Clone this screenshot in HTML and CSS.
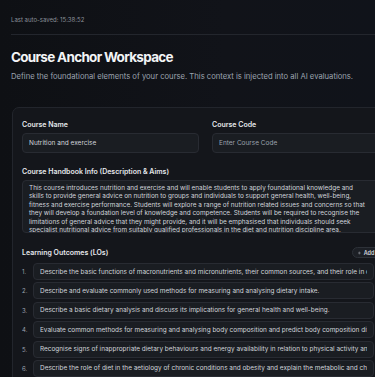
FILE: index.html
```html
<!DOCTYPE html>
<html lang="en">
<head>
  <meta charset="UTF-8" />
  <meta name="viewport" content="width=device-width, initial-scale=1" />
  <title>Course Anchor Workspace</title>
  <link rel="stylesheet" href="styles.css">
</head>
<body>
  <div class="page">
    <div class="topbar">
      <span class="saved">Last auto-saved: 15:38:52</span>
    </div>
    <h1>Course Anchor Workspace</h1>
    <p class="subtitle">Define the foundational elements of your course. This context is injected into all AI evaluations.</p>

    <div class="card">
      <div class="grid">
        <div class="field">
          <label for="courseName">Course Name</label>
          <input type="text" id="courseName" value="Nutrition and exercise" />
        </div>
        <div class="field">
          <label for="courseCode">Course Code</label>
          <input type="text" id="courseCode" placeholder="Enter Course Code" />
        </div>
      </div>

      <div class="field">
        <label for="handbook">Course Handbook Info (Description &amp; Aims)</label>
        <textarea id="handbook">This course introduces nutrition and exercise and will enable students to apply foundational knowledge and skills to provide general advice on nutrition to groups and individuals to support general health, well-being, fitness and exercise performance. Students will explore a range of nutrition related issues and concerns so that they will develop a foundation level of knowledge and competence. Students will be required to recognise the limitations of general advice that they might provide, and it will be emphasised that individuals should seek specialist nutritional advice from suitably qualified professionals in the diet and nutrition discipline area.</textarea>
      </div>

      <div class="lo-head">
        <label>Learning Outcomes (LOs)</label>
        <button class="add-btn" id="addLo">
          <svg width="6" height="6" viewBox="0 0 10 10"><path d="M5 1v8M1 5h8" stroke="currentColor" stroke-width="1.4" stroke-linecap="round"/></svg>
          Add LO
        </button>
      </div>
      <ol class="lo-list" id="loList"></ol>
    </div>
  </div>
  <script>
    const loList = document.getElementById('loList');
    let los = [
      'Describe the basic functions of macronutrients and micronutrients, their common sources, and their role in optimal health and performance.',
      'Describe and evaluate commonly used methods for measuring and analysing dietary intake.',
      'Describe a basic dietary analysis and discuss its implications for general health and well-being.',
      'Evaluate common methods for measuring and analysing body composition and predict body composition differences.',
      'Recognise signs of inappropriate dietary behaviours and energy availability in relation to physical activity and health.',
      'Describe the role of diet in the aetiology of chronic conditions and obesity and explain the metabolic and chronic disease risks.'
    ];

    function renderLos() {
      loList.innerHTML = '';
      los.forEach((lo, index) => {
        loList.innerHTML += `
          <li class="lo-row">
            <span class="lo-num">${index + 1}.</span>
            <input type="text" value="${lo}" />
            <button class="del-btn" onclick="deleteLo(${index})">&times;</button>
          </li>
        `;
      });
    }

    function deleteLo(index) {
      los.splice(index, 1);
      renderLos();
    }

    document.getElementById('addLo').onclick = () => {
      los.push('');
      renderLos();
    };

    renderLos();
  </script>
</body>
</html>
```

FILE: styles.css
```css
html, body {
  margin: 0;
  overflow: hidden;
}
body {
  font-family: 'Inter', sans-serif;
  background: linear-gradient(90deg, #0e1014 0%, #111319 60%, #10131a 100%);
  color: #e5e7eb;
  height: 100vh;
}
.page {
  width: 388px;
  padding-left: 11px;
}
.topbar {
  padding: 16px 0 10px;
  border-bottom: 1px solid #23262d;
  font-size: 6px;
  line-height: 8px;
}
.saved {
  color: #8b9099;
}
h1 {
  margin: 13px 0 0;
  font-size: 13.5px;
  line-height: 18px;
  font-weight: 700;
  letter-spacing: -0.7px;
  color: #f3f4f6;
}
.subtitle {
  margin: 6px 0 0;
  font-size: 7.65px;
  line-height: 10px;
  color: #9ca3af;
}
.card {
  margin: 25px 0 0 1px;
  background: #14161b;
  border: 1px solid #22252c;
  border-radius: 7px;
  padding: 12px 9px 20px;
}
.grid {
  display: grid;
  grid-template-columns: 1fr 1fr;
  gap: 13px;
}
.field {
  display: flex;
  flex-direction: column;
  margin-bottom: 14px;
}
label {
  font-size: 7px;
  line-height: 9px;
  font-weight: 600;
  color: #e5e7eb;
  margin-bottom: 4px;
}
input, textarea {
  font-family: 'Inter', sans-serif;
  background: #1a1d22;
  border: 1px solid #282b32;
  border-radius: 4px;
  color: #d1d5db;
  box-sizing: border-box;
  outline: none;
}
input {
  height: 20px;
  padding: 0 6px;
  font-size: 6.5px;
}
input::placeholder {
  color: #9ca3af;
}
textarea {
  height: 53px;
  padding: 3px 20px 3px 6px;
  font-size: 6.4px;
  line-height: 8.4px;
  resize: none;
  overflow: hidden;
}
.field:last-of-type {
  margin-bottom: 13px;
}
.lo-head {
  display: flex;
  justify-content: space-between;
  align-items: center;
  height: 11px;
  margin-bottom: 5px;
}
.lo-head label {
  margin: 0;
}
.add-btn {
  display: flex;
  align-items: center;
  gap: 3px;
  height: 11px;
  padding: 0 5px;
  width: 37px;
  box-sizing: border-box;
  background: #1c1f25;
  border: 1px solid #2d3138;
  border-radius: 6px;
  color: #d1d5db;
  font-family: 'Inter', sans-serif;
  font-size: 5.5px;
  font-weight: 600;
  white-space: nowrap;
  cursor: pointer;
}
.lo-list {
  list-style: none;
  margin: 0;
  padding: 0;
  display: flex;
  flex-direction: column;
  gap: 2.4px;
}
.lo-row {
  display: flex;
  align-items: center;
  gap: 4px;
}
.lo-num {
  width: 7px;
  font-size: 6px;
  color: #9ca3af;
}
.lo-row input {
  flex: 1;
  height: 17px;
  font-size: 6.45px;
}
.del-btn {
  width: 11px;
  height: 11px;
  padding: 0;
  background: none;
  border: none;
  color: #6b7280;
  cursor: pointer;
  font-size: 8px;
  line-height: 11px;
}
```
